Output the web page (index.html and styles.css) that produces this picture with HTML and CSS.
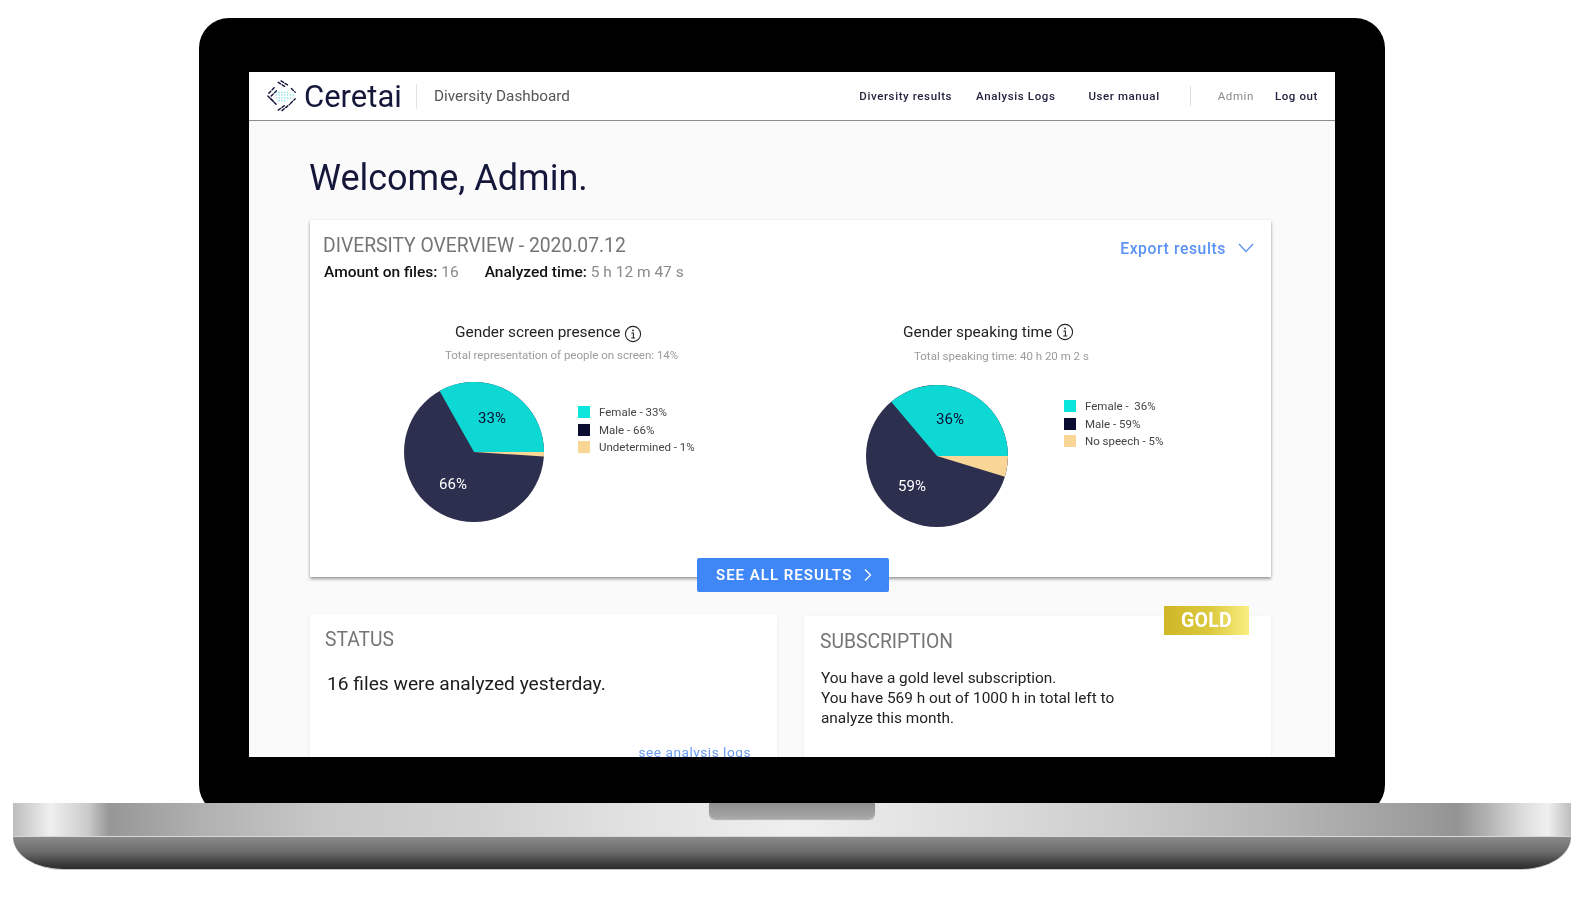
FILE: index.html
```html
<!DOCTYPE html>
<html lang="en">
<head>
<meta charset="utf-8">
<title>Ceretai Diversity Dashboard</title>
<link rel="stylesheet" href="styles.css">
</head>
<body>
<div class="laptop">
  <div class="lid">
    <div class="screen">
      <header class="topbar">
        <div class="brand">
          <svg class="logo-mark" viewBox="0 0 34 34" width="32" height="32" aria-hidden="true">
            <g fill="none" stroke="#14163a" stroke-width="1.5" stroke-linecap="round" stroke-dasharray="3 2">
              <path d="M13 2.5 L21 7.5"/><path d="M16 1 L24 6"/>
              <path d="M3 14 L10 7"/><path d="M5.5 17 L12 10.5"/>
              <path d="M2 17 L8 23"/><path d="M5 20 L11 26"/>
              <path d="M13 32 L20 27"/><path d="M17 32.5 L25 26"/>
              <path d="M27 9 L31 13"/><path d="M26 25 L31 20"/>
            </g>
            <g fill="#6fdfe2">
              <circle cx="11" cy="13" r=".8"/><circle cx="14" cy="13" r=".8"/><circle cx="17" cy="13" r=".8"/><circle cx="20" cy="13" r=".8"/><circle cx="23" cy="13" r=".8"/>
              <circle cx="11" cy="16" r=".8"/><circle cx="14" cy="16" r=".8"/><circle cx="17" cy="16" r=".8"/><circle cx="20" cy="16" r=".8"/><circle cx="23" cy="16" r=".8"/><circle cx="26" cy="16" r=".8"/><circle cx="29" cy="16" r=".8"/>
              <circle cx="11" cy="19" r=".8"/><circle cx="14" cy="19" r=".8"/><circle cx="17" cy="19" r=".8"/><circle cx="20" cy="19" r=".8"/><circle cx="23" cy="19" r=".8"/><circle cx="26" cy="19" r=".8"/>
              <circle cx="14" cy="22" r=".8"/><circle cx="17" cy="22" r=".8"/><circle cx="20" cy="22" r=".8"/>
            </g>
          </svg>
          <span class="wordmark">Ceretai</span>
        </div>
        <span class="app-name">Diversity Dashboard</span>
        <nav class="nav">
          <a class="nav-link nav-results">Diversity results</a>
          <a class="nav-link nav-logs">Analysis Logs</a>
          <a class="nav-link nav-manual">User manual</a>
          <span class="nav-sep"></span>
          <span class="nav-user">Admin</span>
          <a class="nav-link nav-logout">Log out</a>
        </nav>
      </header>

      <main class="content">
        <h1 class="welcome">Welcome, Admin.</h1>

        <section class="card overview">
          <div class="overview-head">
            <div>
              <h2 class="card-title">DIVERSITY OVERVIEW - 2020.07.12</h2>
              <p class="meta">
                <span class="meta-item"><b>Amount on files:</b> 16</span>
                <span class="meta-item"><b>Analyzed time:</b> 5 h 12 m 47 s</span>
              </p>
            </div>
            <a class="export">Export results
              <svg viewBox="0 0 16 10" width="16" height="10" aria-hidden="true"><path d="M1 1 L8 8.5 L15 1" fill="none" stroke="#5b93f5" stroke-width="1.3"/></svg>
            </a>
          </div>

          <div class="charts">
            <div class="chart chart-presence">
              <h3 class="chart-title">Gender screen presence
                <svg class="info" viewBox="0 0 18 18" width="18" height="18" aria-hidden="true"><circle cx="9" cy="9" r="7.6" fill="none" stroke="#222" stroke-width="1.1"/><path d="M7.4 8 H9.4 V13 M7.2 13 H11.2" fill="none" stroke="#222" stroke-width="1.1"/><circle cx="9" cy="5.4" r=".9" fill="#222"/></svg>
              </h3>
              <p class="chart-sub">Total representation of people on screen: 14%</p>
              <div class="pie-row">
                <svg class="pie" viewBox="0 0 140 140" width="140" height="140" role="img">
                  <circle class="s-navy" cx="70" cy="70" r="70"/>
                  <path class="s-teal" d="M70 70 L140 70 A70 70 0 0 0 35.6 9 Z"/>
                  <path class="s-peach" d="M70 70 L140 70 L139.9 74.4 Z"/>
                  <text class="pie-dark" x="88" y="41">33%</text>
                  <text class="pie-light" x="49" y="107">66%</text>
                </svg>
                <ul class="legend">
                  <li><i class="swatch k-teal"></i>Female - 33%</li>
                  <li><i class="swatch k-navy"></i>Male - 66%</li>
                  <li><i class="swatch k-peach"></i>Undetermined - 1%</li>
                </ul>
              </div>
            </div>

            <div class="chart chart-speaking">
              <h3 class="chart-title">Gender speaking time
                <svg class="info" viewBox="0 0 18 18" width="18" height="18" aria-hidden="true"><circle cx="9" cy="9" r="7.6" fill="none" stroke="#222" stroke-width="1.1"/><path d="M7.4 8 H9.4 V13 M7.2 13 H11.2" fill="none" stroke="#222" stroke-width="1.1"/><circle cx="9" cy="5.4" r=".9" fill="#222"/></svg>
              </h3>
              <p class="chart-sub">Total speaking time: 40 h 20 m 2 s</p>
              <div class="pie-row">
                <svg class="pie" viewBox="0 0 142 142" width="142" height="142" role="img">
                  <circle class="s-navy" cx="71" cy="71" r="71"/>
                  <path class="s-teal" d="M71 71 L142 71 A71 71 0 0 0 25.2 16.8 Z"/>
                  <path class="s-peach" d="M71 71 L142 71 A71 71 0 0 1 138.9 91.8 Z"/>
                  <text class="pie-dark" x="84" y="39">36%</text>
                  <text class="pie-light" x="46" y="106">59%</text>
                </svg>
                <ul class="legend">
                  <li><i class="swatch k-teal"></i>Female - &nbsp;36%</li>
                  <li><i class="swatch k-navy"></i>Male - 59%</li>
                  <li><i class="swatch k-peach"></i>No speech - 5%</li>
                </ul>
              </div>
            </div>
          </div>

          <a class="see-all">SEE ALL RESULTS
            <svg viewBox="0 0 8 14" width="8" height="14" aria-hidden="true"><path d="M1 1.5 L6.5 7 L1 12.5" fill="none" stroke="#fff" stroke-width="1.3"/></svg>
          </a>
        </section>

        <div class="lower">
          <section class="card status">
            <h2 class="card-title">STATUS</h2>
            <p class="status-text">16 files were analyzed yesterday.</p>
            <a class="logs-link">see analysis logs</a>
          </section>
          <section class="card subscription">
            <span class="gold">GOLD</span>
            <h2 class="card-title">SUBSCRIPTION</h2>
            <p class="sub-text">You have a gold level subscription.<br>You have 569 h out of 1000 h in total left to analyze this month.</p>
          </section>
        </div>
      </main>
    </div>
  </div>
  <div class="base">
    <div class="base-top"><span class="notch"></span></div>
    <div class="base-bottom"></div>
  </div>
</div>
</body>
</html>
```

FILE: styles.css
```css
* { box-sizing: border-box; }
html, body { margin: 0; padding: 0; background: #fff; }
body { width: 1584px; height: 900px; overflow: hidden; font-family: Roboto, "Liberation Sans", sans-serif; }

.laptop { padding-top: 18px; display: flex; flex-direction: column; }

.lid {
  width: 1186px; height: 797px; margin-left: 199px;
  padding: 54px 50px 0;
  background: #000; border-radius: 30px;
}
.screen {
  width: 1086px; height: 685px; overflow: hidden;
  background: #fafafa; filter: blur(.35px);
}

.base { position: relative; width: 1558px; margin: -12px 0 0 13px; }
.base-top {
  height: 34px; display: flex; justify-content: center;
  background: linear-gradient(90deg, #bdbdbd 0, #f0f0f0 2.4%, #cbcbcb 4.8%, #a8a8a8 5.7%, #979797 6.2%, #b0b0b0 12%, #c8c8c8 20%, #d2d2d2 30%, #e2e2e2 40%, #efefef 50%, #e0e0e0 60%, #cbcbcb 72%, #b4b4b4 82%, #9a9a9a 91%, #939393 92.7%, #b0b0b0 94.5%, #dedede 97%, #f0f0f0 98.5%, #bdbdbd 100%);
  border-bottom: 1px solid #d6d6d6;
}
.notch {
  width: 166px; height: 16px;
  background: linear-gradient(180deg, #8e8e8e, #a9a9a9);
  border-radius: 0 0 6px 6px;
  box-shadow: 0 1px 1px rgba(0,0,0,.25);
}
.base-bottom {
  height: 33px; border-radius: 0 0 50px 50px / 0 0 33px 33px;
  background: linear-gradient(180deg, #8a8a8a 0, #6d6d6d 45%, #3c3c3c 85%, #2b2b2b 100%);
  border-bottom: 1px solid #c5c5c5;
}

/* top bar */
.topbar {
  height: 49px; display: flex; align-items: center;
  background: #fff; border-bottom: 1px solid #8c8c8c;
}
.brand { display: flex; align-items: center; padding-left: 17px; width: 168px; height: 25px; border-right: 1px solid #e4e4e4; }
.logo-mark { flex: none; margin-right: 6px; }
.wordmark { font-size: 31px; color: #14163a; }
.app-name { margin-left: 17px; font-size: 15.3px; color: #555; margin-top: -1px; }
.nav { display: flex; align-items: center; margin-left: auto; }
.nav-link { font-size: 11.5px; font-weight: 500; letter-spacing: .6px; color: #23243f; }
.nav-logs { margin-left: 24px; }
.nav-manual { margin-left: 33px; }
.nav-sep { width: 1px; height: 20px; background: #ddd; margin: 0 27px 0 30px; }
.nav-user { font-size: 11.5px; letter-spacing: .6px; color: #8a8a8a; }
.nav-logout { margin: -1px 17px 0 21px; }

/* content */
.content { padding: 0 64px 0 61px; }
.welcome {
  margin: 35px 0 20px -1px; height: 44px;
  font: 400 36px/44px Roboto, sans-serif;
  color: #14163a;
}
.card { position: relative; background: #fff; box-shadow: 0 1px 3px rgba(0,0,0,.08); }
.card-title { margin: 0; font-size: 19.3px; line-height: 24px; font-weight: 400; color: #757575; }

.overview { height: 357px; box-shadow: 0 0 2px rgba(0,0,0,.06), 0 2px 3px rgba(0,0,0,.38); }
.overview-head { display: flex; justify-content: space-between; padding: 14px 17px 0 13px; }
.meta { margin: 4px 0 0 1px; font-size: 15.5px; line-height: 20px; color: #8a8a8a; display: flex; gap: 26px; }
.meta b { font-weight: 500; color: #111; }
.export {
  display: flex; align-items: center; gap: 12px; height: 28px;
  font-size: 15.7px; font-weight: 500; letter-spacing: .6px; color: #5b93f5;
}

.charts { display: grid; grid-template-columns: 448px 1fr; padding-top: 39px; }
.chart-title { margin: 0 0 0 145px; display: flex; align-items: center; gap: 4px; font-size: 15.4px; line-height: 22px; font-weight: 400; color: #222; white-space: nowrap; }
.chart-sub { margin: 4px 0 0; font-size: 11.5px; line-height: 16px; color: #9b9b9b; }
.chart-presence .chart-sub { margin-left: 135px; }
.chart-speaking .chart-sub { margin: 5px 0 0 156px; }
.chart-presence .info { margin-top: 3px; }
.pie-row { display: flex; align-items: flex-start; }
.chart-presence .pie-row { margin: 19px 0 0 94px; }
.chart-speaking .pie-row { margin: 21px 0 0 108px; }
.pie { flex: none; display: block; }
.s-teal { fill: #0ed8d4; }
.s-navy { fill: #2d2f4e; }
.s-peach { fill: #f9d596; }
.pie-dark, .pie-light { font-size: 15px; text-anchor: middle; }
.pie-dark { fill: #0b0c30; }
.pie-light { fill: #fff; }
.legend { list-style: none; margin: 0; padding: 0; font-size: 11.5px; line-height: 18px; color: #444; }
.legend li { display: flex; align-items: center; gap: 9px; height: 17.7px; white-space: pre; }
.chart-presence .legend { margin: 21px 0 0 34px; }
.chart-speaking .legend { margin: 12px 0 0 56px; }
.swatch { width: 12px; height: 12px; display: block; }
.k-teal { background: #0ae6dc; }
.k-navy { background: #0b0c30; }
.k-peach { background: #f9d596; }

.see-all {
  position: absolute; left: 387px; bottom: -15px;
  width: 192px; height: 34px; padding-left: 19px; display: flex; align-items: center; gap: 12px;
  background: #3f86f6; border-radius: 2px;
  color: #fff; font-size: 15px; font-weight: 600; letter-spacing: 1px;
}

.lower { display: flex; gap: 27px; margin-top: 37px; align-items: flex-start; }
.status, .subscription { width: 467px; height: 200px; }
.status { padding: 14px 26px 0 15px; }
.status-text { margin: 20px 0 0 2px; font-size: 19.2px; line-height: 24px; color: #1c1c1c; }
.logs-link { display: block; margin-top: 47px; text-align: right; font-size: 13.7px; line-height: 18px; letter-spacing: .5px; color: #6a9cf5; }
.subscription { margin-top: 2px; padding: 14px 0 0 16px; }
.sub-text { margin: 14px 0 0 1px; width: 300px; font-size: 15.4px; line-height: 20px; color: #222; }
.gold {
  position: absolute; top: -10px; right: 22px; width: 85px; height: 29px;
  display: flex; align-items: center; justify-content: center;
  background: linear-gradient(90deg, #cfb726, #dcc93f 55%, #faee80);
  color: #fff; font-size: 19.5px; font-weight: 700; letter-spacing: .3px;
}
```
